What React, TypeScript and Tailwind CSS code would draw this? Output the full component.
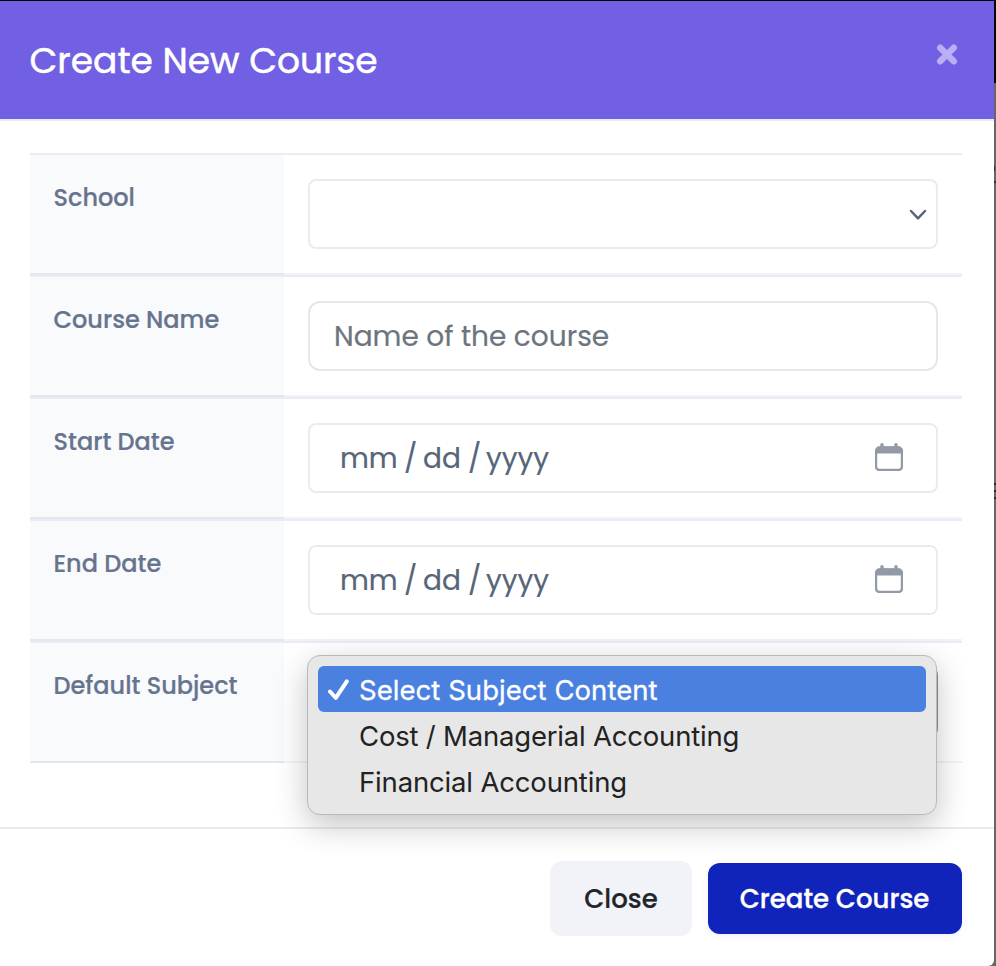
import React from "react";

const CalendarIcon = () => (
  <svg className="-mt-[2px]" width="28" height="28" viewBox="0 0 28 28" fill="none">
    <path d="M7 1.7V6M21 1.7V6" stroke="#929aa8" strokeWidth="3.4" strokeLinecap="round" />
    <rect x="1" y="4.5" width="26" height="22.5" rx="3.5" stroke="#929aa8" strokeWidth="2.4" />
    <path d="M1 10.5V7.5A4 4 0 0 1 5 3.5H23A4 4 0 0 1 27 7.5V10.5Z" fill="#929aa8" />
  </svg>
);

const SelectField = () => (
  <div className="flex h-[70px] items-center justify-end rounded-[8px] border-2 border-[#e9ecef] bg-white pr-[9px]">
    <svg className="mt-[2px]" width="18" height="12" viewBox="0 0 18 12" fill="none">
      <path d="M2 2L9 9.3L16 2" stroke="#566579" strokeWidth="2.5" strokeLinecap="round" strokeLinejoin="round" />
    </svg>
  </div>
);

const NameField = () => (
  <div className="flex h-[70px] items-center rounded-[12px] border-2 border-[#e5e7eb] bg-white pl-6 pt-[2px] text-[28px] text-[#6c757d]">
    <span className="whitespace-nowrap [-webkit-text-stroke:0.2px]">Name of the course</span>
  </div>
);

const DateField = () => (
  <div className="flex h-[70px] items-center justify-between rounded-[8px] border-2 border-[#e9ecef] bg-white pl-[30px] pr-[33px] text-[28px] text-[#566579]">
    <span className="flex whitespace-nowrap pt-[2px] [-webkit-text-stroke:0.2px]">
      <span className="w-[64px]">mm</span>
      <span className="w-[19px]">/</span>
      <span className="w-[45px]">dd</span>
      <span className="w-[18px]">/</span>
      <span>yyyy</span>
    </span>
    <CalendarIcon />
  </div>
);

const options = [
  { id: 1, title: "Select Subject Content", tracking: "tracking-[0.05px]" },
  { id: 2, title: "Cost / Managerial Accounting", tracking: "tracking-[-0.2px]" },
  { id: 3, title: "Financial Accounting", tracking: "tracking-[-0.16px]" },
];

const SubjectField = () => (
  <div className="relative h-[70px] rounded-[8px] border-2 border-[#8f9296] bg-white">
    <div className="absolute -left-[3px] -top-[14px] h-[160px] w-[630px] rounded-[13px] border border-[#b9b9b9] bg-[#e7e7e7] px-[10px] pt-[10px] font-['Inter',sans-serif] shadow-[0_10px_32px_rgba(0,0,0,0.24)]">
      {options.map(({ id, title, tracking }) => (
        <div
          key={id}
          className={`flex h-[46px] items-center text-[27.5px] ${
            id === 1 ? "rounded-[6px] bg-[#4a81e0] text-white [-webkit-text-stroke:0.3px]" : "text-[#222222]"
          }`}
        >
          <div className="w-[41px] shrink-0 pl-[10px]">
            {id === 1 && (
              <svg className="mt-[2px]" width="22" height="22" viewBox="0 0 22 22" fill="none">
                <path d="M2 12.5L7.8 18.8L18.8 2.4" stroke="white" strokeWidth="4" strokeLinecap="round" strokeLinejoin="round" />
              </svg>
            )}
          </div>
          <span className={`whitespace-nowrap pt-[4px] ${tracking}`}>{title}</span>
        </div>
      ))}
    </div>
  </div>
);

const rows = [
  { label: "School", field: <SelectField /> },
  { label: "Course Name", field: <NameField /> },
  { label: "Start Date", field: <DateField /> },
  { label: "End Date", field: <DateField /> },
  { label: "Default Subject", field: <SubjectField /> },
];

const App = () => {
  return (
    <div className="flex h-[966px] w-[996px] overflow-hidden bg-[#666666] font-['Poppins','Inter',sans-serif]">
      <div className="flex w-[994px] flex-col rounded-br-[6px] border-t border-black bg-white">
        <div className="flex h-[120px] items-start justify-between border-b-2 border-[#e9ecf5] bg-[#7160e3] pl-[29.5px] pr-[36px]">
          <h5 className="mt-[36px] whitespace-nowrap text-[36px] font-normal leading-[48px] text-white [-webkit-text-stroke:0.5px]">
            Create New Course
          </h5>
          <svg className="mt-[42px]" width="22" height="23" viewBox="0 0 22 23" fill="none">
            <path d="M4.2 4.7L17.8 18.3M17.8 4.7L4.2 18.3" stroke="#b9aff2" strokeWidth="6.4" strokeLinecap="round" />
          </svg>
        </div>

        <div className="h-[706px] pl-[30px] pr-[32px] pt-[32px]">
          {rows.map(({ label, field }) => (
            <div key={label} className="flex h-[122px] border-t-2 border-[#e9ecf3]">
              <div className="w-[254px] border-b-2 border-[#e2e8f0] bg-[#f9fafc] pl-[23.5px] pt-[25px]">
                <p className="whitespace-nowrap text-[24px] font-medium leading-[36px] text-[#67748e] [-webkit-text-stroke:0.2px]">
                  {label}
                </p>
              </div>
              <div className="flex-1 border-b-2 border-[#f1f3f9] px-6 pt-6">{field}</div>
            </div>
          ))}
        </div>

        <div className="flex flex-1 items-start justify-end gap-x-4 border-t-2 border-[#e9ecef] pr-[32px] pt-8">
          <button className="h-[75px] w-[142px] whitespace-nowrap rounded-[12px] bg-[#f2f3f8] pt-[2px] text-[26px] font-medium text-[#212529] [-webkit-text-stroke:0.2px]">
            Close
          </button>
          <button className="mt-[2px] h-[71px] w-[254px] whitespace-nowrap rounded-[12px] bg-[#1023bb] pr-[1px] pt-[2px] text-[26px] font-medium text-white shadow-[0_2px_6px_rgba(113,96,227,0.1)] [-webkit-text-stroke:0.3px]">
            Create Course
          </button>
        </div>
      </div>
      {/* dimmed page behind the modal */}
      <div className="w-[2px] bg-[#666666]">
        <div className="h-[83px] bg-black" />
        <div className="mt-[83px] h-[5px] w-px bg-[#2e3040]" />
        <div className="mt-[10px] h-[2px] bg-[#2e3040]" />
        <div className="mt-[300px] h-[2px] bg-[#2b2b2b]" />
        <div className="mt-[5px] h-[2px] bg-[#2b2b2b]" />
        <div className="mt-[5px] h-[2px] bg-[#2b2b2b]" />
      </div>
    </div>
  );
};

export default App;
